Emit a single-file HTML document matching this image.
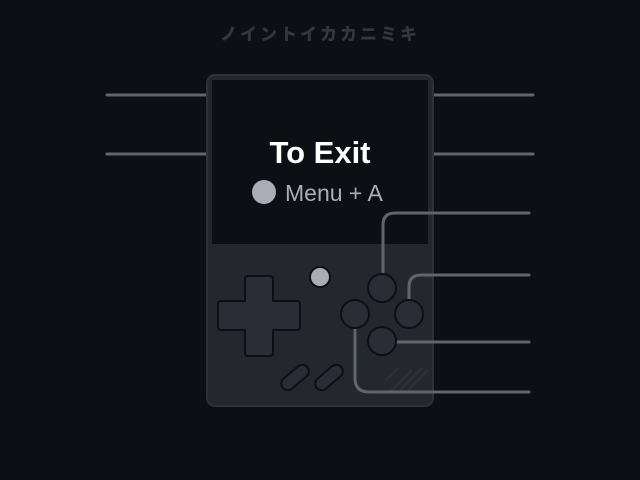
<!DOCTYPE html>
<html><head><meta charset="utf-8"><style>
html,body{margin:0;padding:0;background:#0c0f14;width:640px;height:480px;overflow:hidden}
.t{position:absolute;left:0;top:20px;width:640px;text-align:center;font:900 17px "Noto Sans CJK JP",sans-serif;color:#33373d;letter-spacing:3px}
</style></head><body>
<div class="t">ノイントイカカニミキ</div>
<svg width="640" height="480" style="position:absolute;left:0;top:0">
<g stroke="#5f656d" stroke-width="3" stroke-linecap="round" fill="none">
<line x1="107" y1="95" x2="207" y2="95"/><line x1="107" y1="154" x2="207" y2="154"/>
<line x1="433" y1="95" x2="533" y2="95"/><line x1="433" y1="154" x2="533" y2="154"/>
</g>
<rect x="207" y="75" width="226" height="331" rx="8" fill="#24272d" stroke="#2e3137" stroke-width="2"/>
<rect x="212" y="80" width="216" height="164" fill="#0c0f14"/>
<text x="320" y="163" text-anchor="middle" font-family="Liberation Sans,sans-serif" font-weight="bold" font-size="31" fill="#fff">To Exit</text>
<circle cx="264" cy="192" r="12" fill="#a9aeb6"/>
<text x="285" y="201" font-family="Liberation Sans,sans-serif" font-size="23" fill="#a9aeb6">Menu + A</text>
<g stroke="#2e3238" stroke-width="3" opacity=".8">
<line x1="390" y1="392" x2="412" y2="370"/><line x1="398" y1="392" x2="422" y2="368"/><line x1="406" y1="392" x2="428" y2="370"/><line x1="386" y1="380" x2="398" y2="368"/>
</g>
<g stroke="#5f656d" stroke-width="3" stroke-linecap="round" fill="none">
<path d="M383 272 V225 Q383 213 395 213 H529"/>
<path d="M409 300 V287 Q409 275 421 275 H529"/>
<path d="M396 342 H529"/>
<path d="M355 330 V378 Q355 392 369 392 H529"/>
</g>
<path d="M248 276 h22 q3 0 3 3 v22 h24 q3 0 3 3 v23 q0 3 -3 3 h-24 v23 q0 3 -3 3 h-22 q-3 0 -3 -3 v-23 h-24 q-3 0 -3 -3 v-23 q0 -3 3 -3 h24 v-22 q0 -3 3 -3 z" fill="#2a2d35" stroke="#0c0f14" stroke-width="2" stroke-linejoin="round"/>
<circle cx="320" cy="277" r="10" fill="#a9aeb6" stroke="#0c0f14" stroke-width="2"/>
<g fill="#2a2d35" stroke="#0c0f14" stroke-width="2">
<circle cx="382" cy="288" r="14"/><circle cx="355" cy="314" r="14"/><circle cx="409" cy="314" r="14"/><circle cx="382" cy="341" r="14"/>
<rect x="279" y="371" width="32" height="13" rx="6.5" transform="rotate(-40 295 377.5)"/>
<rect x="313" y="371" width="32" height="13" rx="6.5" transform="rotate(-40 329 377.5)"/>
</g>
</svg>
</body></html>
